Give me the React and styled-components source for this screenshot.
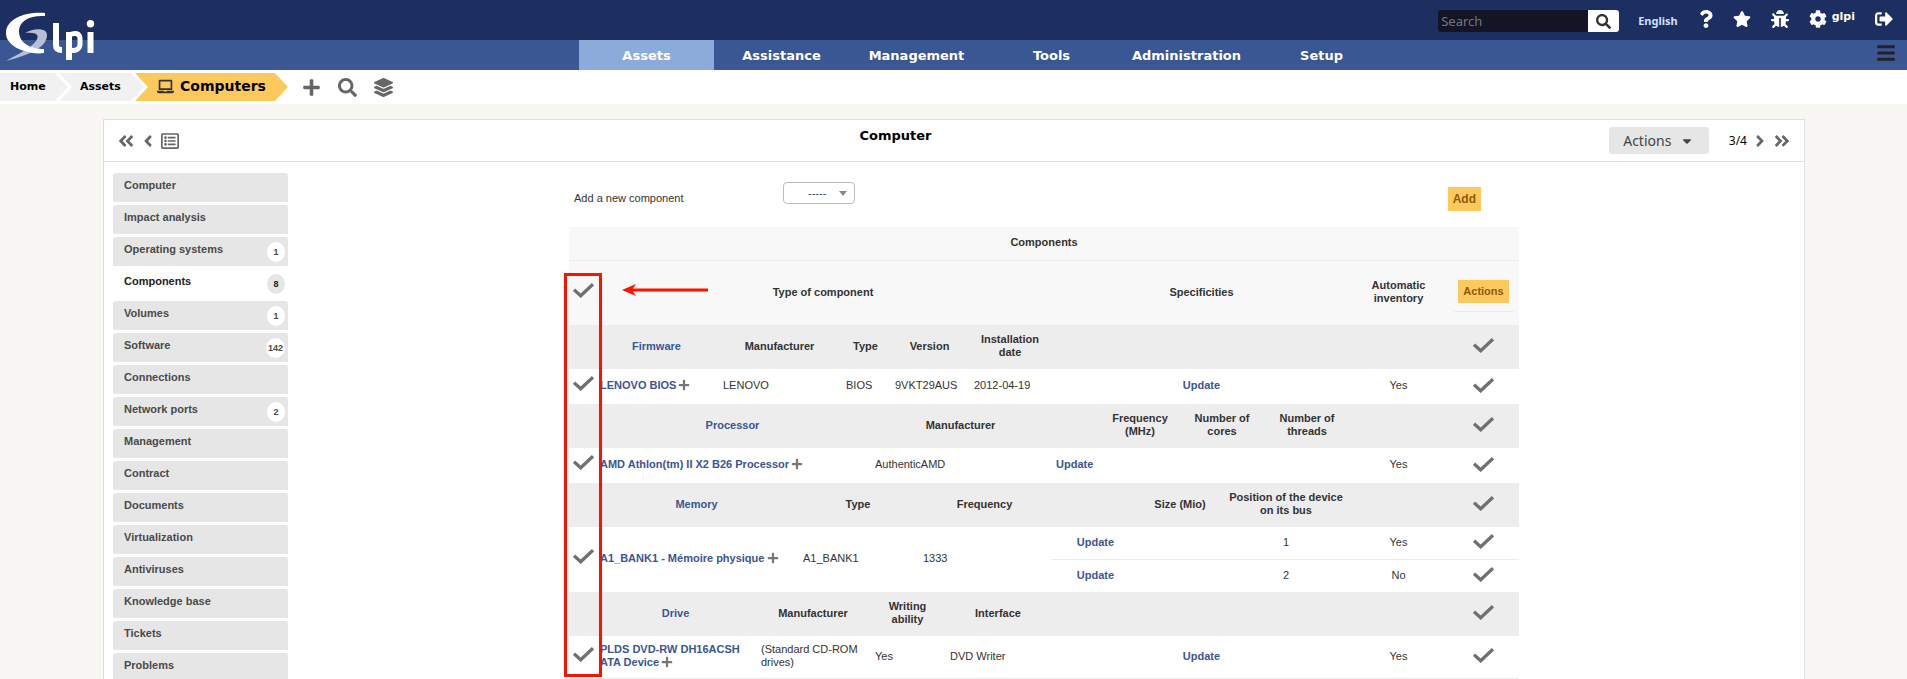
import React from 'react';
import styled, { createGlobalStyle } from 'styled-components';
import { FaQuestion, FaStar, FaBug, FaCog, FaSignOutAlt, FaBars, FaPlus, FaSearch, FaLayerGroup, FaLaptop, FaAngleDoubleLeft, FaAngleLeft, FaAngleRight, FaAngleDoubleRight, FaCaretDown, FaRegListAlt } from 'react-icons/fa';

const Global = createGlobalStyle`
  * { box-sizing: border-box; }
  body { margin: 0; background: #f8f7f3; color: #333; font: 11px/13px "Liberation Sans", Arial, sans-serif; overflow: hidden; }
  button { cursor: pointer; border: 0; padding: 0; background: none; font: inherit; color: inherit; }
  a { text-decoration: none; color: inherit; }
`;

const ui = '"DejaVu Sans", Verdana, sans-serif';
const soft = '"Noto Sans", "Open Sans", sans-serif';

const Header = styled.header`
  position: relative;
  font-family: ${ui};
  color: #fff;
`;
const LogoLink = styled.a`
  position: absolute;
  left: 5px;
  top: 11px;
  svg { display: block; }
`;
const TopBar = styled.div`
  height: 40px;
  background: #1d2e61;
  display: flex;
  justify-content: flex-end;
  align-items: flex-start;
  padding: 0 14px 0 0;
`;
const SearchForm = styled.form`
  display: flex;
  margin: 10px 19px 0 0;
  height: 22px;
  border-radius: 3px;
  overflow: hidden;
  input {
    width: 150px; border: 0; padding: 0 3px; background: #131426; color: #ccc;
    font: 13px/22px ${soft};
  }
  input::placeholder { color: #757581; opacity: 1; }
  button { width: 31px; background: #fff; color: #333; font-size: 15px; display: grid; place-items: center; }
`;
const Language = styled.a`
  margin: 14px 19px 0 0;
  font: bold 11px/14px ${soft};
  color: #cfe0ff;
`;
const TopIcon = styled.a`
  display: flex;
  margin: 10px 0 0 ${(p) => p.$gap || 0}px;
  font-size: 18px;
  span { font: bold 11px/14px ${ui}; margin-left: 5px; }
`;
const MenuBar = styled.nav`
  height: 30px;
  padding-left: 61px;
  background: #3a5693;
  display: flex;
  justify-content: center;
  position: relative;
`;
const MenuLink = styled.a`
  width: 135px;
  text-align: center;
  font: bold 13px/31px ${ui};
  background: ${(p) => (p.$active ? '#8cabdb' : 'none')};
`;
const Burger = styled.button`
  position: absolute;
  right: 11px;
  top: 3px;
  font-size: 20px;
  color: #222;
  svg { display: block; }
`;
const CrumbBar = styled.nav`
  height: 34px;
  background: #fff;
  display: flex;
  align-items: center;
  font-family: ${ui};
  color: #000;
`;
const Crumb = styled.a`
  height: 28px;
  width: ${(p) => p.$w}px;
  margin-right: ${(p) => (p.$current ? 0 : -9)}px;
  padding: 0 0 2px ${(p) => p.$pad}px;
  display: flex;
  align-items: center;
  gap: 6px;
  font-size: ${(p) => (p.$current ? 14 : 11)}px;
  font-weight: bold;
  background: ${(p) => (p.$current ? '#fec95c' : '#f1f1f1')};
  clip-path: polygon(0 0, calc(100% - 13px) 0, 100% 50%, calc(100% - 13px) 100%, 0 100%, ${(p) => (p.$first ? 0 : 13)}px 50%);
  svg { font-size: 17px; color: #333; }
`;
const CrumbTools = styled.div`
  display: flex;
  gap: 17px;
  margin-left: 14px;
  color: #666;
  font-size: 19px;
  svg { display: block; }
`;
const Panel = styled.main`
  margin: 15px 102px 0 103px;
  background: #fff;
  border: 1px solid #dfdfdf;
`;
const PanelHead = styled.div`
  height: 42px;
  border-bottom: 1px solid #dfdfdf;
  display: grid;
  grid-template-columns: 1fr auto 1fr;
  padding: 0 13px;
`;
const Title = styled.h1`
  margin: 8px 0 0;
  padding-right: 117px;
  font: bold 13px/16px ${ui};
  color: #000;
`;
const Pager = styled.div`
  display: flex;
  align-items: center;
  gap: 4px;
  justify-content: ${(p) => (p.$end ? 'flex-end' : 'flex-start')};
  font: 12px/16px ${soft};
  color: #000;
  button { color: #666; font-size: 18px; display: flex; }
`;
const MassActions = styled.button`
  && {
    width: 100px; height: 27px; margin-right: 16px; border-radius: 3px;
    background: #e6e6e6; color: #444; font: 14px/27px ${soft};
    align-items: center; justify-content: center; gap: 9px;
  }
`;
const PanelBody = styled.div`
  display: flex;
  align-items: flex-start;
`;
const Tabs = styled.nav`
  flex: none;
  width: 175px;
  margin: 11px 0 0 9px;
  display: flex;
  flex-direction: column;
  gap: 3px;
`;
const Tab = styled.a`
  height: 29px;
  padding: 5px 3px 0 11px;
  display: flex;
  justify-content: space-between;
  font-weight: bold;
  line-height: 15px;
  border-radius: 3px 3px 0 0;
  color: ${(p) => (p.$active ? '#222' : '#4a4a4a')};
  background: ${(p) => (p.$active ? '#fff' : '#e6e6e6')};
`;
const Badge = styled.span`
  min-width: 18px;
  height: 20px;
  padding: 0 2px;
  border-radius: 50%;
  text-align: center;
  font-size: 9px;
  line-height: 20px;
  background: ${(p) => (p.$active ? '#e6e6e6' : '#fff')};
`;
const Content = styled.section`
  flex: 1;
  display: flex;
  flex-direction: column;
  align-items: center;
  padding-right: 4px;
`;
const AddForm = styled.form`
  width: 950px;
  height: 65px;
  padding: 20px 38px 0 5px;
  display: flex;
  align-items: flex-start;
  label { width: 209px; padding-top: 10px; }
  button { margin-top: 5px; }
`;
const SelectWrap = styled.div`
  position: relative;
  flex: 1;
  select {
    appearance: none; width: 72px; height: 22px; padding: 0 20px 0 24px; border: 1px solid #bbb; border-radius: 4px;
    background: #fff; color: #444; font: 11px "Liberation Sans", Arial, sans-serif;
  }
  svg { position: absolute; left: 56px; top: 9px; pointer-events: none; }
`;
const Submit = styled.button`
  height: ${(p) => p.$h}px;
  padding: 0 5px;
  background: #fec95c;
  color: #8f5a0a;
  font: bold ${(p) => p.$size}px "Liberation Sans", Arial, sans-serif;
`;
const TableWrap = styled.div`
  position: relative;
  width: 950px;
`;
const Table = styled.table`
  width: 100%;
  table-layout: fixed;
  border-collapse: separate;
  border-spacing: 0;
  th, td { padding: 0 5px 2px; text-align: left; vertical-align: middle; }
`;
const Row = styled.tr`
  height: ${(p) => p.$h}px;
  background: ${(p) => p.$bg || '#fff'};
  && > th { text-align: center; }
  && > th, && > td { border-bottom: ${(p) => (p.$line ? '1px solid #ebebeb' : '0')}; }
  && > td[rowspan] { border-bottom: 0; }
`;
const Mid = styled.td`
  && { text-align: center; }
`;
const Pick = styled.td`
  && { padding: 0 0 6px 4px; }
`;
const Mark = styled.td`
  && { padding: 0 0 3px 3px; text-align: center; }
`;
const Tick = styled.label`
  display: inline-block;
  vertical-align: middle;
  position: relative;
  width: 21px;
  height: 15px;
  input { position: absolute; inset: 0; margin: 0; opacity: 0; width: 100%; height: 100%; }
  svg { display: block; }
`;
const Link = styled.a`
  && { color: #3a5693; font-weight: bold; }
`;
const Plus = styled(FaPlus)`
  color: #777;
  font-size: 12px;
  vertical-align: -2px;
  margin-left: -1px;
`;
const ActionBox = styled.div`
  width: 60px;
  height: 40px;
  margin: 0 auto;
  display: flex;
  align-items: center;
  justify-content: center;
  border-bottom: 1px solid #ebebeb;
`;
const Frame = styled.div`
  position: absolute;
  left: -5px;
  top: 46px;
  width: 38px;
  height: 404px;
  border: 3px solid #f10;
  pointer-events: none;
`;
const Arrow = styled.svg`
  position: absolute;
  left: 53px;
  top: 57px;
`;

const cols = [26, 123, 38, 42, 43, 29, 20, 28, 27, 24, 82, 47, 42, 42, 38, 42, 90, 93, 74];
const GREY = '#ededed';

const Check = ({ name }) => (
  <Tick>
    <input type="checkbox" aria-label={name} />
    <svg width="21" height="15" viewBox="0 0 21 15"><path d="M1 6.600 7.700 12.800 20 1.200" fill="none" stroke="#707070" strokeWidth="3.300" /></svg>
  </Tick>
);

const GroupHead = ({ cells }) => (
  <Row $h={44} $bg={GREY}>
    <td />
    {cells.map(([text, span], i) => (
      <th key={i} colSpan={span} scope="col">{i === 0 ? <Link href="#">{text}</Link> : text}</th>
    ))}
    <td />
    <Mark><Check name={`Select ${cells[0][0]}`} /></Mark>
  </Row>
);

const Device = ({ children }) => (
  <><Link href="#">{children}</Link> <Plus /></>
);

const tabs = [
  ['Computer'], ['Impact analysis'], ['Operating systems', 1], ['Components', 8], ['Volumes', 1], ['Software', 142],
  ['Connections'], ['Network ports', 2], ['Management'], ['Contract'], ['Documents'], ['Virtualization'],
  ['Antiviruses'], ['Knowledge base'], ['Tickets'], ['Problems'],
];
const menu = ['Assets', 'Assistance', 'Management', 'Tools', 'Administration', 'Setup'];

const Logo = () => (
  <svg width="92" height="52" viewBox="0 0 92 52" aria-label="GLPI">
    <path d="M40 2C20 .5 1 8 1 22c0 13 18 21 38 20v-4C25 38 14 32 14 20 14 10 25 4 40 5Z" fill="#fff" />
    <path d="M20 22c8-5 23-6 22 3C41 38 20 45 1 50c10-6 24-12 30-20 4-6 1-9-11-8Z" fill="#c3cade" fillOpacity=".92" />
    <path d="M18 39c7 3 14 4 21 3v-4c-4 0-8 0-12-2Z" fill="#fff" />
    <g fill="none" stroke="#fff" strokeWidth="6">
      <path d="M51 12v22q0 5 6 5" />
      <path d="M64 49V21" />
      <path d="M64 24q10-4 11 3v7q-1 7-11 5" strokeWidth="5" />
      <path d="M85.500 21v21" />
    </g>
    <circle cx="85.500" cy="12.700" r="3.700" fill="#fff" />
  </svg>
);

export default function App() {
  return (
    <>
      <Global />
      <Header>
        <TopBar>
          <SearchForm>
            <input placeholder="Search" aria-label="Search" />
            <button type="button" aria-label="Search"><FaSearch /></button>
          </SearchForm>
          <Language href="#">English</Language>
          <TopIcon href="#" aria-label="Help"><FaQuestion /></TopIcon>
          <TopIcon href="#" $gap={18} aria-label="Bookmarks"><FaStar /></TopIcon>
          <TopIcon href="#" $gap={20} aria-label="Debug"><FaBug /></TopIcon>
          <TopIcon href="#" $gap={20}><FaCog /><span>glpi</span></TopIcon>
          <TopIcon href="#" $gap={20} aria-label="Log out"><FaSignOutAlt /></TopIcon>
        </TopBar>
        <MenuBar>
          {menu.map((m, i) => <MenuLink href="#" key={m} $active={i === 0}>{m}</MenuLink>)}
          <Burger aria-label="Menu"><FaBars /></Burger>
        </MenuBar>
        <LogoLink href="#" aria-label="GLPI home"><Logo /></LogoLink>
      </Header>
      <CrumbBar>
        <Crumb href="#" $first $w={68} $pad={10}>Home</Crumb>
        <Crumb href="#" $w={85} $pad={21}>Assets</Crumb>
        <Crumb href="#" $current $w={153} $pad={22}><FaLaptop />Computers</Crumb>
        <CrumbTools>
          <button aria-label="Add"><FaPlus /></button>
          <button aria-label="Search"><FaSearch /></button>
          <button aria-label="Templates"><FaLayerGroup /></button>
        </CrumbTools>
      </CrumbBar>
      <Panel>
        <PanelHead>
          <Pager>
            <button aria-label="First"><FaAngleDoubleLeft /></button>
            <button aria-label="Previous"><FaAngleLeft /></button>
            <button aria-label="List"><FaRegListAlt /></button>
          </Pager>
          <Title>Computer</Title>
          <Pager $end>
            <MassActions>Actions <FaCaretDown size={14} /></MassActions>
            <span>3/4</span>
            <button aria-label="Next"><FaAngleRight /></button>
            <button aria-label="Last"><FaAngleDoubleRight /></button>
          </Pager>
        </PanelHead>
        <PanelBody>
          <Tabs>
            {tabs.map(([name, count]) => (
              <Tab href="#" key={name} $active={name === 'Components'}>
                {name}
                {count && <Badge $active={name === 'Components'}>{count}</Badge>}
              </Tab>
            ))}
          </Tabs>
          <Content>
            <AddForm>
              <label htmlFor="component">Add a new component</label>
              <SelectWrap>
                <select id="component"><option>-----</option></select>
                <svg width="8" height="5" viewBox="0 0 8 5"><path d="M0 0h8L4 5Z" fill="#888" /></svg>
              </SelectWrap>
              <Submit type="button" $h={24} $size={12}>Add</Submit>
            </AddForm>
            <TableWrap>
              <Table>
                <colgroup>{cols.map((w, i) => <col key={i} width={w} />)}</colgroup>
                <tbody>
                  <Row $h={34} $bg="#f8f8f8" $line><th colSpan={19}>Components</th></Row>
                  <Row $h={64} $bg="#f8f8f8">
                    <Pick><Check name="Select all" /></Pick>
                    <th colSpan={10}>Type of component</th>
                    <th colSpan={6}>Specificities</th>
                    <th>Automatic inventory</th>
                    <Mark><ActionBox><Submit type="button" $h={23} $size={11}>Actions</Submit></ActionBox></Mark>
                  </Row>
                  <GroupHead cells={[['Firmware', 1], ['Manufacturer', 3], ['Type', 2], ['Version', 3], ['Installation date', 1], ['', 6]]} />
                  <Row $h={35}>
                    <Pick><Check name="Firmware rows" /></Pick>
                    <td><Device>LENOVO BIOS</Device></td>
                    <td colSpan={3}>LENOVO</td>
                    <td colSpan={2}>BIOS</td>
                    <td colSpan={3}>9VKT29AUS</td>
                    <td>2012-04-19</td>
                    <Mid colSpan={6}><Link href="#">Update</Link></Mid>
                    <Mid>Yes</Mid>
                    <Mark><Check name="LENOVO BIOS" /></Mark>
                  </Row>
                  <GroupHead cells={[['Processor', 5], ['Manufacturer', 5], ['', 1], ['Frequency (MHz)', 2], ['Number of cores', 2], ['Number of threads', 1]]} />
                  <Row $h={35}>
                    <Pick><Check name="Processor rows" /></Pick>
                    <td colSpan={5}><Device>AMD Athlon(tm) II X2 B26 Processor</Device></td>
                    <td colSpan={5}>AuthenticAMD</td>
                    <td colSpan={6}><Link href="#">Update</Link></td>
                    <Mid>Yes</Mid>
                    <Mark><Check name="AMD Athlon" /></Mark>
                  </Row>
                  <GroupHead cells={[['Memory', 3], ['Type', 4], ['Frequency', 3], ['', 2], ['Size (Mio)', 2], ['Position of the device on its bus', 2]]} />
                  <Row $h={33} $line>
                    <Pick rowSpan={2}><Check name="Memory rows" /></Pick>
                    <td rowSpan={2} colSpan={3}><Device>A1_BANK1 - Mémoire physique</Device></td>
                    <td rowSpan={2} colSpan={4}>A1_BANK1</td>
                    <td rowSpan={2} colSpan={3}>1333</td>
                    <Mid colSpan={2}><Link href="#">Update</Link></Mid>
                    <td colSpan={2} />
                    <Mid colSpan={2}>1</Mid>
                    <Mid>Yes</Mid>
                    <Mark><Check name="Memory 1" /></Mark>
                  </Row>
                  <Row $h={32}>
                    <Mid colSpan={2}><Link href="#">Update</Link></Mid>
                    <td colSpan={2} />
                    <Mid colSpan={2}>2</Mid>
                    <Mid>No</Mid>
                    <Mark><Check name="Memory 2" /></Mark>
                  </Row>
                  <GroupHead cells={[['Drive', 2], ['Manufacturer', 3], ['Writing ability', 3], ['Interface', 2], ['', 6]]} />
                  <Row $h={43} $line>
                    <Pick><Check name="Drive rows" /></Pick>
                    <td colSpan={2}><Device>PLDS DVD-RW DH16ACSH ATA Device</Device></td>
                    <td colSpan={3}>(Standard CD-ROM drives)</td>
                    <td colSpan={3}>Yes</td>
                    <td colSpan={2}>DVD Writer</td>
                    <Mid colSpan={6}><Link href="#">Update</Link></Mid>
                    <Mid>Yes</Mid>
                    <Mark><Check name="DVD drive" /></Mark>
                  </Row>
                </tbody>
              </Table>
              <Frame />
              <Arrow width="88" height="12" viewBox="0 0 88 12"><path d="M0 6 14 0 11 4.500H86V7.500H11L14 12Z" fill="#f10" /></Arrow>
            </TableWrap>
          </Content>
        </PanelBody>
      </Panel>
    </>
  );
}
